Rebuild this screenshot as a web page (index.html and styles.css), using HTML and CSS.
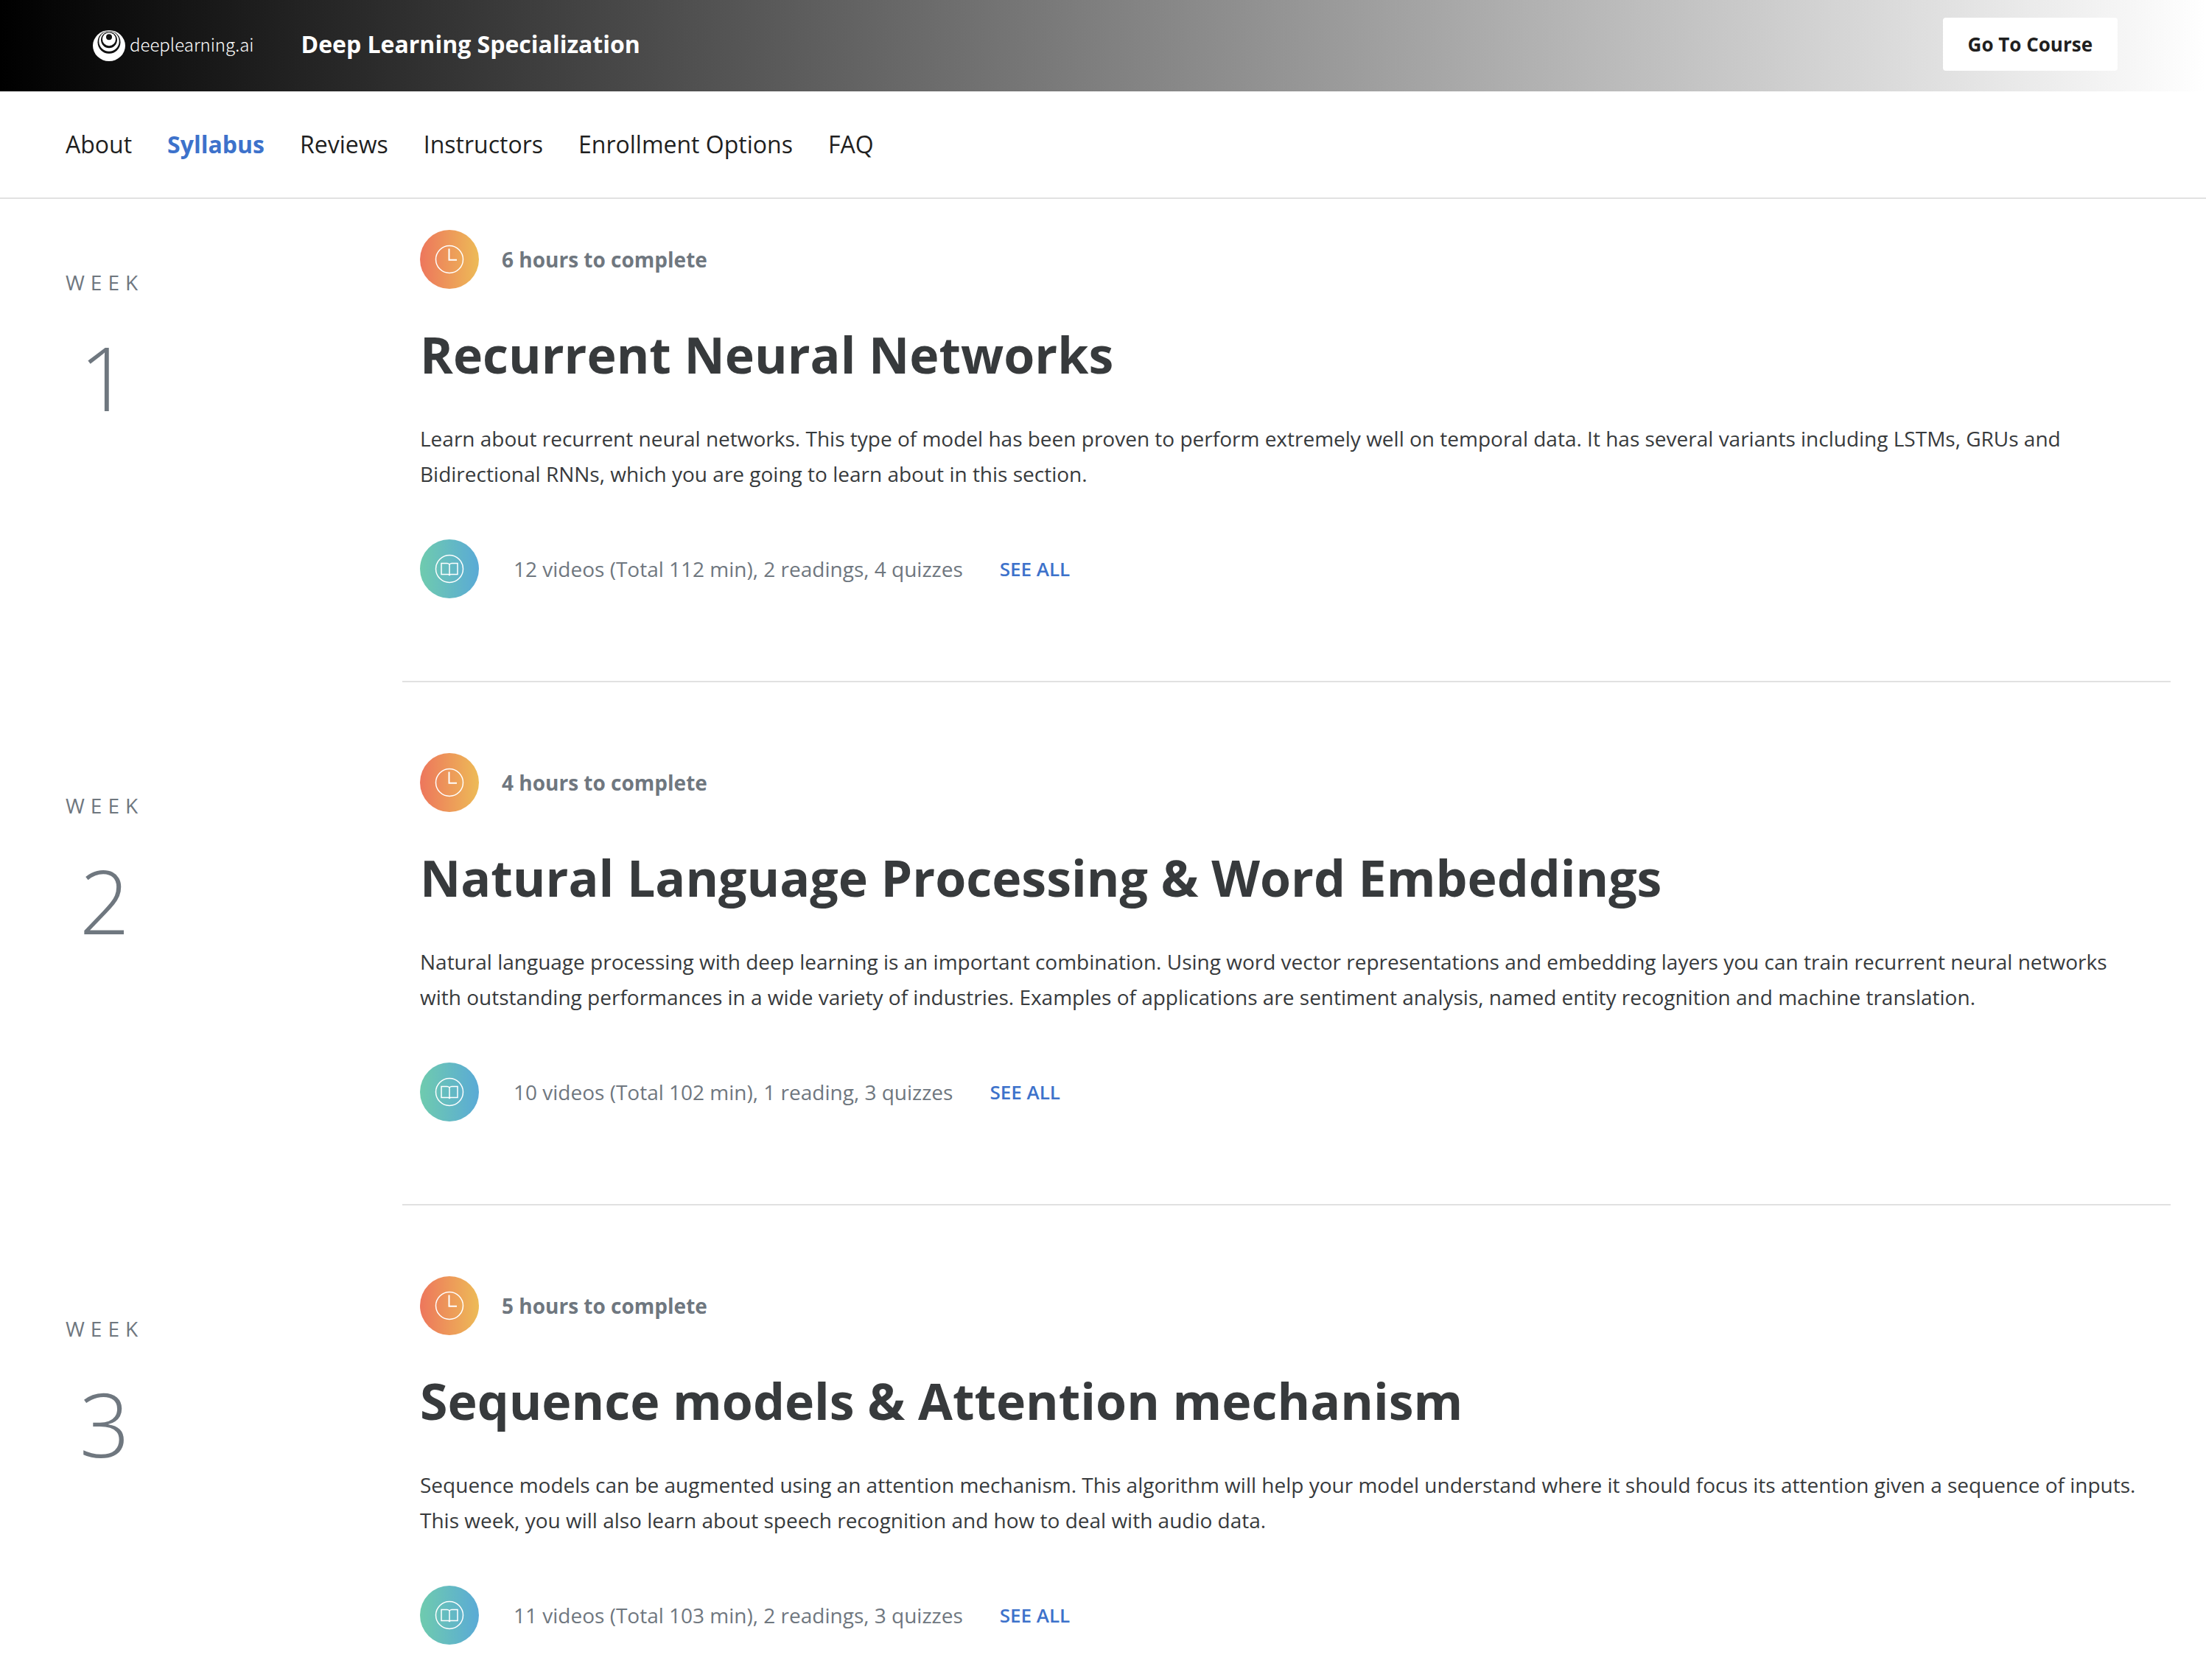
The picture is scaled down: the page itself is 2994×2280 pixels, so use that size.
FILE: index.html
```html
<!DOCTYPE html>
<html lang="en">
<head>
<meta charset="utf-8">
<title>Deep Learning Specialization</title>
<link rel="stylesheet" href="styles.css">
</head>
<body>
<svg class="sprite" aria-hidden="true">
  <symbol id="clock" viewBox="0 0 80 80">
    <circle cx="40" cy="40" r="18.5" fill="none" stroke="#fff" stroke-width="1.5"/>
    <path d="M39.5 25.500v15.200h10.500" fill="none" stroke="#fff" stroke-width="2"/>
  </symbol>
  <symbol id="book" viewBox="0 0 80 80">
    <circle cx="40" cy="40" r="18.5" fill="none" stroke="#fff" stroke-width="1.5"/>
    <path d="M40 34.500C39.500 33 38.500 32.500 37 32.500H29V47.500H38.500L40 48.500L41.500 47.500H51V32.500H43C41.500 32.500 40.500 33 40 34.500V49" fill="none" stroke="#fff" stroke-width="1.500"/>
  </symbol>
</svg>
<header class="banner">
  <a class="logo" href="#">
    <svg class="logo-mark" viewBox="0 0 44 42" aria-hidden="true">
      <ellipse cx="22" cy="21" rx="22" ry="21" fill="#fff"/>
      <circle cx="22" cy="16.300" r="15.500" fill="#111"/>
      <circle cx="22" cy="15" r="13.700" fill="#fff"/>
      <circle cx="22" cy="13.200" r="11" fill="#111"/>
      <circle cx="22" cy="12.200" r="9" fill="#fff"/>
      <circle cx="22" cy="9.300" r="4" fill="#111"/>
    </svg>
    <span class="logo-text">deeplearning.ai</span>
  </a>
  <span class="banner-title">Deep Learning Specialization</span>
  <button class="go" type="button">Go To Course</button>
</header>
<nav class="tabs">
  <a href="#about">About</a>
  <a class="active" href="#syllabus">Syllabus</a>
  <a href="#reviews">Reviews</a>
  <a href="#instructors">Instructors</a>
  <a href="#enroll">Enrollment Options</a>
  <a href="#faq">FAQ</a>
</nav>
<main id="syllabus">
  <section class="week">
    <div class="week-label"><span class="word">WEEK</span><span class="number">1</span></div>
    <div class="week-body">
      <div class="row hours"><svg class="icon warm" aria-hidden="true"><use href="#clock"/></svg><span>6 hours to complete</span></div>
      <h2>Recurrent Neural Networks</h2>
      <p>Learn about recurrent neural networks. This type of model has been proven to perform extremely well on temporal data. It has several variants including LSTMs, GRUs and Bidirectional RNNs, which you are going to learn about in this section.</p>
      <div class="row items"><svg class="icon cool" aria-hidden="true"><use href="#book"/></svg><span>12 videos (Total 112 min), 2 readings, 4 quizzes</span><button type="button">SEE ALL</button></div>
    </div>
  </section>
  <section class="week">
    <div class="week-label"><span class="word">WEEK</span><span class="number">2</span></div>
    <div class="week-body">
      <div class="row hours"><svg class="icon warm" aria-hidden="true"><use href="#clock"/></svg><span>4 hours to complete</span></div>
      <h2>Natural Language Processing &amp; Word Embeddings</h2>
      <p>Natural language processing with deep learning is an important combination. Using word vector representations and embedding layers you can train recurrent neural networks with outstanding performances in a wide variety of industries. Examples of applications are sentiment analysis, named entity recognition and machine translation.</p>
      <div class="row items"><svg class="icon cool" aria-hidden="true"><use href="#book"/></svg><span>10 videos (Total 102 min), 1 reading, 3 quizzes</span><button type="button">SEE ALL</button></div>
    </div>
  </section>
  <section class="week">
    <div class="week-label"><span class="word">WEEK</span><span class="number">3</span></div>
    <div class="week-body">
      <div class="row hours"><svg class="icon warm" aria-hidden="true"><use href="#clock"/></svg><span>5 hours to complete</span></div>
      <h2>Sequence models &amp; Attention mechanism</h2>
      <p>Sequence models can be augmented using an attention mechanism. This algorithm will help your model understand where it should focus its attention given a sequence of inputs. This week, you will also learn about speech recognition and how to deal with audio data.</p>
      <div class="row items"><svg class="icon cool" aria-hidden="true"><use href="#book"/></svg><span>11 videos (Total 103 min), 2 readings, 3 quizzes</span><button type="button">SEE ALL</button></div>
    </div>
  </section>
</main>
</body>
</html>
```
FILE: styles.css
```css
* { box-sizing: border-box; }
body {
  margin: 0;
  background: #fff;
  color: #373a3c;
  font-family: "Open Sans", sans-serif;
  font-size: 28px;
  line-height: 48px;
}
a { color: inherit; text-decoration: none; }
button { font-family: inherit; border: 0; cursor: pointer; }
.sprite { display: none; }

.banner {
  display: flex;
  align-items: center;
  padding: 24px 120px 28px 126px;
  background: linear-gradient(90deg, #000, #fff);
}
.logo { display: flex; align-items: center; gap: 6px; color: #fff; margin-right: 64px; }
.logo-mark { width: 44px; height: 42px; margin-top: 4px; }
.logo-text {
  font-family: "Noto Sans CJK SC", sans-serif;
  font-weight: 300;
  font-size: 24px;
}
.banner-title { color: #fff; font-size: 32px; font-weight: 700; }
.go {
  margin-left: auto;
  height: 72px;
  padding: 0 34px;
  border-radius: 4px;
  background: #fff;
  color: #1f1f1f;
  font-size: 26px;
  font-weight: 700;
}

.tabs {
  display: flex;
  gap: 48px;
  padding: 48px 89px;
  border-bottom: 2px solid #e1e1e1;
  font-size: 32px;
  color: #1f1f1f;
}
.tabs .active { color: #3d72cb; font-weight: 700; }

.week { display: grid; grid-template-columns: 498px 1fr; padding: 0 48px; }
.week-label {
  display: flex;
  flex-direction: column;
  align-items: flex-start;
  padding: 143px 0 0 41px;
  color: #6f777f;
}
.word { letter-spacing: 8px; }
.number { width: 106px; padding-top: 33px; font-size: 120px; line-height: 144px; font-weight: 300; text-align: center; }
.week-body { padding: 96px 24px 112px; border-bottom: 2px solid #e1e1e1; }
.week:first-child .week-label { padding-top: 89px; }
.week:first-child .week-body { padding-top: 42px; }
.row { display: flex; align-items: center; color: #6f777f; }
.icon { width: 80px; height: 80px; border-radius: 50%; }
.warm { background: linear-gradient(90deg, #ed765c, #edbb57); }
.cool { background: linear-gradient(90deg, #6fcbae, #5aaad6); }
.hours { gap: 31px; font-weight: 700; }
h2 { margin: 47px 0 48px; font-size: 68px; line-height: 84px; font-weight: 700; }
p { margin: 0 0 65px; }
.items span { margin: 0 50px 0 47px; }
.items button { padding: 0; background: none; color: #3d72cb; font-size: 26px; font-weight: 600; }
```
